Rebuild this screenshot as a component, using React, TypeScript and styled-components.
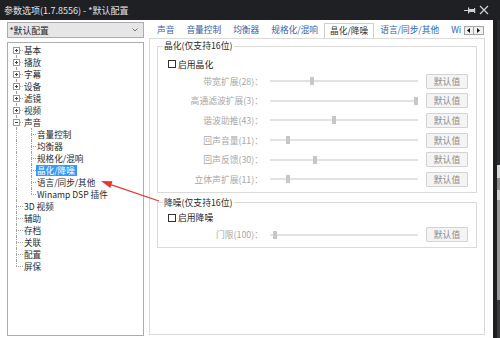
import React, { FunctionComponent, ReactElement } from 'react';
import styled, { createGlobalStyle, css } from 'styled-components';

const colors = {
    titleBg: '#1f2024',
    titleText: '#e4e4e4',
    border: '#acacac',
    light: '#dadada',
    line: '#a3a3a3',
    text: '#1c1c1c',
    disabled: '#a8a8a8',
    tab: '#3463ab',
    select: '#3399ff',
    arrow: '#e8362f',
};

const GlobalStyle = createGlobalStyle`
    html, body {
        margin: 0;
        padding: 0;
        background: #fff;
    }
    body {
        font-family: "Noto Sans CJK SC", "Noto Sans", sans-serif;
    }
    * {
        box-sizing: border-box;
    }
`;

const Window = styled.div`
    position: relative;
    width: 500px;
    height: 338px;
    display: flex;
    flex-direction: column;
    overflow: hidden;
    background: #fff;
`;

const TitleBar = styled.div`
    height: 20px;
    flex: none;
    display: flex;
    align-items: center;
    padding: 0 11px 0 4px;
    background: ${colors.titleBg};
    color: ${colors.titleText};
    font-size: 9px;
`;

const Title = styled.span`
    flex: 1;
    white-space: nowrap;
`;

const TitleButtons = styled.div`
    display: flex;
    align-items: center;
    gap: 3px;
`;

const Body = styled.div`
    flex: 1;
    display: flex;
    min-height: 0;
`;

const Main = styled.div`
    flex: 1;
    min-width: 0;
    display: flex;
    gap: 5px;
    padding: 2px 8px 2px 7px;
    background: #fff;
`;

const Backdrop = styled.div`
    width: 7px;
    flex: none;
    background:
        linear-gradient(to right, #1d1e21 0 4px, transparent 4px),
        linear-gradient(
            to bottom,
            #2a2b2e 0 145px,
            #d8d8d8 145px 158px,
            #8c8c8c 158px 170px,
            #d0d0d0 170px 180px,
            #979797 180px 280px,
            #3a3a3c 280px
        );
`;

const LeftColumn = styled.div`
    width: 137px;
    flex: none;
    display: flex;
    flex-direction: column;
    gap: 4px;
`;

const Combo = styled.div`
    height: 16px;
    flex: none;
    display: flex;
    align-items: center;
    justify-content: space-between;
    padding: 0 5px 0 1.5px;
    border: 1px solid ${colors.border};
    background: #e6e6e6;
    color: ${colors.text};
    font-size: 8.8px;
`;

const Tree = styled.div`
    flex: 1;
    padding-top: 1px;
    border: 1px solid ${colors.border};
    background: #fff;
`;

const TreeRow = styled.div`
    display: flex;
    height: 12px;
    align-items: center;
`;

type GuideKind = 'first' | 'tee' | 'last' | 'pipe';

interface IGuide {
    $kind: GuideKind;
    $width: number;
}

const Guide = styled.div<IGuide>`
    position: relative;
    width: ${({ $width }: IGuide): number => $width}px;
    height: 12px;
    flex: none;

    &::before {
        content: '';
        position: absolute;
        left: 8px;
        top: ${({ $kind }: IGuide): string => ($kind === 'first' ? '6px' : '0')};
        bottom: ${({ $kind }: IGuide): string => ($kind === 'last' ? '6px' : '0')};
        border-left: 1px dotted ${colors.line};
    }

    ${({ $kind }: IGuide) =>
        $kind !== 'pipe' &&
        css`
            &::after {
                content: '';
                position: absolute;
                left: 8px;
                right: 0;
                top: 6px;
                border-top: 1px dotted ${colors.line};
            }
        `}
`;

const Expander = styled.svg`
    position: absolute;
    left: 5px;
    top: 3px;
    z-index: 1;
`;

interface ITreeLabel {
    $selected?: boolean;
}

const TreeLabel = styled.span<ITreeLabel>`
    height: 11px;
    padding: 0 2px 0 1px;
    line-height: 11px;
    font-size: 8.6px;
    white-space: nowrap;
    color: ${({ $selected }: ITreeLabel): string => ($selected ? '#fff' : '#2a2a2a')};
    background: ${({ $selected }: ITreeLabel): string => ($selected ? colors.select : 'transparent')};
`;

const RightColumn = styled.div`
    width: 336px;
    flex: none;
    display: flex;
    flex-direction: column;
`;

const TabStrip = styled.div`
    height: 16px;
    flex: none;
    display: flex;
    align-items: flex-end;
`;

const TabList = styled.div`
    flex: 1;
    display: flex;
    align-items: flex-end;
    padding-left: 2px;
    overflow: hidden;
    min-width: 0;
`;

interface ITab {
    $active?: boolean;
}

const Tab = styled.div<ITab>`
    position: relative;
    flex: none;
    height: 15px;
    padding: 0 6px;
    line-height: 13px;
    font-size: 8.7px;
    white-space: nowrap;
    color: ${colors.tab};

    ${({ $active }: ITab) =>
        $active &&
        css`
            z-index: 1;
            height: 16px;
            margin-bottom: -1px;
            padding: 0 5px;
            border: 1px solid #cfcfcf;
            border-bottom: none;
            background: #fff;
            color: #333;
        `}
`;

const ScrollButtons = styled.div`
    flex: none;
    display: flex;
    align-self: flex-start;
    margin: 4px 1.5px 0 0;
`;

const ScrollButton = styled.div`
    width: 10px;
    height: 9px;
    display: flex;
    align-items: center;
    justify-content: center;
    border: 1px solid #a5a5a5;
    background: #f0f0f0;

    & + & {
        border-left: none;
    }
`;

const TabPage = styled.div`
    flex: 1;
    display: flex;
    flex-direction: column;
    gap: 4px;
    margin-bottom: 1px;
    padding: 1px 7px 0;
    border: 1px solid ${colors.light};
    background: #fff;
`;

interface IGroupBox {
    $top: number;
}

const GroupBox = styled.fieldset<IGroupBox>`
    min-width: 0;
    margin: 0;
    padding: ${({ $top }: IGroupBox): number => $top}px 7px 5px 0;
    border: 1px solid ${colors.light};
`;

const GroupTitle = styled.legend`
    margin-left: 5px;
    padding: 0 1px;
    line-height: 12px;
    font-size: 8.8px;
    color: #2b2b2b;
`;

const CheckRow = styled.label`
    height: 12px;
    display: flex;
    align-items: center;
    gap: 2px;
    padding-left: 10px;
    font-size: 8.8px;
    color: ${colors.text};
`;

const CheckBox = styled.span`
    width: 8px;
    height: 8px;
    border: 1px solid #333;
    background: #fff;
`;

const SliderList = styled.div`
    display: flex;
    flex-direction: column;
    gap: 4.7px;
    margin-top: 3.5px;
`;

const SliderRow = styled.div`
    display: grid;
    grid-template-columns: 105px 148px 43px;
    column-gap: 7px;
    align-items: center;
    height: 15px;

    & > :last-child {
        margin-left: 1px;
    }
`;

const SliderLabel = styled.span`
    text-align: right;
    white-space: nowrap;
    font-size: 8.8px;
    color: ${colors.disabled};
`;

const Track = styled.div`
    position: relative;
    height: 15px;

    &::before {
        content: '';
        position: absolute;
        left: 0;
        right: 0;
        top: 6.5px;
        height: 2px;
        background: #e2e2e2;
    }
`;

const Thumb = styled.span`
    position: absolute;
    top: 3.5px;
    width: 4px;
    height: 8px;
    background: #c7c7c7;
`;

const DefaultButton = styled.div`
    height: 15px;
    display: flex;
    align-items: center;
    justify-content: center;
    border: 1px solid #d3d3d3;
    border-radius: 1px;
    background: #f4f4f4;
    font-size: 8.8px;
    color: #8c8c8c;
`;

const Annotation = styled.svg`
    position: absolute;
    left: 98px;
    top: 176px;
    pointer-events: none;
`;

interface ITreeItem {
    label: string;
    guides: GuideKind[];
    expander?: 'plus' | 'minus';
    selected?: boolean;
}

const treeItems: ITreeItem[] = [
    { label: '基本', guides: ['first'], expander: 'plus' },
    { label: '播放', guides: ['tee'], expander: 'plus' },
    { label: '字幕', guides: ['tee'], expander: 'plus' },
    { label: '设备', guides: ['tee'], expander: 'plus' },
    { label: '滤镜', guides: ['tee'], expander: 'plus' },
    { label: '视频', guides: ['tee'], expander: 'plus' },
    { label: '声音', guides: ['tee'], expander: 'minus' },
    { label: '音量控制', guides: ['pipe', 'tee'] },
    { label: '均衡器', guides: ['pipe', 'tee'] },
    { label: '规格化/混响', guides: ['pipe', 'tee'] },
    { label: '晶化/降噪', guides: ['pipe', 'tee'], selected: true },
    { label: '语言/同步/其他', guides: ['pipe', 'tee'] },
    { label: 'Winamp DSP 插件', guides: ['pipe', 'last'] },
    { label: '3D 视频', guides: ['tee'] },
    { label: '辅助', guides: ['tee'] },
    { label: '存档', guides: ['tee'] },
    { label: '关联', guides: ['tee'] },
    { label: '配置', guides: ['tee'] },
    { label: '屏保', guides: ['last'] },
];

// the last tab is cut by the scroll buttons, as in the real dialog
const tabs = ['声音', '音量控制', '均衡器', '规格化/混响', '晶化/降噪', '语言/同步/其他', 'Wi'];

interface ISlider {
    label: string;
    position: number;
}

const crystalSliders: ISlider[] = [
    { label: '带宽扩展(28)：', position: 28 },
    { label: '高通滤波扩展(3)：', position: 100 },
    { label: '谐波助推(43)：', position: 43 },
    { label: '回声音量(11)：', position: 11 },
    { label: '回声反馈(30)：', position: 30 },
    { label: '立体声扩展(11)：', position: 11 },
];

const noiseSliders: ISlider[] = [{ label: '门限(100)：', position: 2 }];

const ExpanderIcon: FunctionComponent<{ open: boolean }> = ({ open }): ReactElement => (
    <Expander width="7" height="7" viewBox="0 0 7 7">
        <rect x="0.5" y="0.5" width="6" height="6" fill="#fff" stroke="#9a9a9a" />
        <line x1="2" y1="3.5" x2="5" y2="3.5" stroke="#444" />
        {!open && <line x1="3.5" y1="2" x2="3.5" y2="5" stroke="#444" />}
    </Expander>
);

const Sliders: FunctionComponent<{ items: ISlider[] }> = ({ items }): ReactElement => (
    <SliderList>
        {items.map(
            (item: ISlider): ReactElement => (
                <SliderRow key={item.label}>
                    <SliderLabel>{item.label}</SliderLabel>
                    <Track>
                        <Thumb style={{ left: `${(item.position / 100) * 144}px` }} />
                    </Track>
                    <DefaultButton>默认值</DefaultButton>
                </SliderRow>
            )
        )}
    </SliderList>
);

const App: FunctionComponent = (): ReactElement => (
    <>
        <GlobalStyle />
        <Window>
            <TitleBar>
                <Title>参数选项(1.7.8556) - *默认配置</Title>
                <TitleButtons>
                    <svg width="12" height="7" viewBox="0 0 12 7">
                        <line x1="0" y1="3.5" x2="4" y2="3.5" stroke="#cfcfcf" />
                        <rect x="4" y="0.5" width="1.2" height="6" fill="#cfcfcf" />
                        <rect x="5" y="2" width="5" height="3" fill="#cfcfcf" />
                        <rect x="10" y="1" width="1.2" height="5" fill="#cfcfcf" />
                    </svg>
                    <svg width="10" height="10" viewBox="0 0 10 10">
                        <path d="M1 1 L9 9 M9 1 L1 9" stroke="#d2d2d2" strokeWidth="1.2" />
                    </svg>
                </TitleButtons>
            </TitleBar>
            <Body>
                <Main>
                    <LeftColumn>
                        <Combo>
                            <span>*默认配置</span>
                            <svg width="6" height="4" viewBox="0 0 6 4">
                                <path d="M0.5 0.5 L3 3 L5.5 0.5" fill="none" stroke="#777" />
                            </svg>
                        </Combo>
                        <Tree>
                            {treeItems.map(
                                (item: ITreeItem): ReactElement => (
                                    <TreeRow key={item.label}>
                                        {item.guides.map(
                                            (kind: GuideKind, index: number): ReactElement => (
                                                <Guide key={index} $kind={kind} $width={index === 0 ? 15 : 13}>
                                                    {index === 0 && item.expander && (
                                                        <ExpanderIcon open={item.expander === 'minus'} />
                                                    )}
                                                </Guide>
                                            )
                                        )}
                                        <TreeLabel $selected={item.selected}>{item.label}</TreeLabel>
                                    </TreeRow>
                                )
                            )}
                        </Tree>
                    </LeftColumn>
                    <RightColumn>
                        <TabStrip>
                            <TabList>
                                {tabs.map(
                                    (tab: string): ReactElement => (
                                        <Tab key={tab} $active={tab === '晶化/降噪'}>
                                            {tab}
                                        </Tab>
                                    )
                                )}
                            </TabList>
                            <ScrollButtons>
                                <ScrollButton>
                                    <svg width="3" height="5" viewBox="0 0 3 5">
                                        <path d="M3 0 L0 2.5 L3 5 Z" fill="#111" />
                                    </svg>
                                </ScrollButton>
                                <ScrollButton>
                                    <svg width="3" height="5" viewBox="0 0 3 5">
                                        <path d="M0 0 L3 2.5 L0 5 Z" fill="#111" />
                                    </svg>
                                </ScrollButton>
                            </ScrollButtons>
                        </TabStrip>
                        <TabPage>
                            <GroupBox $top={6}>
                                <GroupTitle>晶化(仅支持16位)</GroupTitle>
                                <CheckRow>
                                    <CheckBox />
                                    启用晶化
                                </CheckRow>
                                <Sliders items={crystalSliders} />
                            </GroupBox>
                            <GroupBox $top={3}>
                                <GroupTitle>降噪(仅支持16位)</GroupTitle>
                                <CheckRow>
                                    <CheckBox />
                                    启用降噪
                                </CheckRow>
                                <Sliders items={noiseSliders} />
                            </GroupBox>
                        </TabPage>
                    </RightColumn>
                </Main>
                <Backdrop />
            </Body>
            <Annotation width="64" height="28" viewBox="0 0 64 28">
                <line x1="12" y1="8.3" x2="61" y2="25" stroke={colors.arrow} strokeWidth="1.3" />
                <polygon points="3,5 12.3,11.9 14.5,5.3" fill={colors.arrow} />
            </Annotation>
        </Window>
    </>
);

export default App;
